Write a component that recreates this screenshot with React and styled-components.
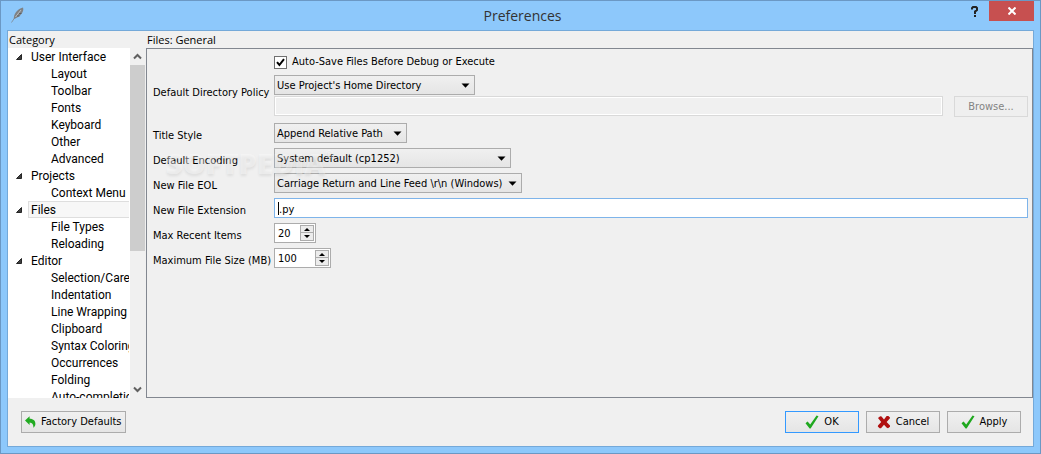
import React, { useState } from "react";
import styled, { createGlobalStyle, css } from "styled-components";

const GlobalStyle = createGlobalStyle`
  * {
    box-sizing: border-box;
  }
  body {
    margin: 0;
    font-family: "DejaVu Sans Condensed", "DejaVu Sans", sans-serif;
    font-size: 11px;
    line-height: 16px;
    color: #000;
  }
  button, input, select {
    font: inherit;
    color: inherit;
    margin: 0;
    border-radius: 0;
  }
`;

const Window = styled.div`
  display: flex;
  flex-direction: column;
  height: 100vh;
  padding: 0 6px 6px;
  background: #8dc8fb;
  border: 1px solid #6b98c4;
`;

const TitleBar = styled.header`
  display: grid;
  grid-template-columns: 1fr auto 1fr;
  height: 29px;
  flex: none;
  padding-left: 4px;
`;

const AppIcon = styled.svg`
  width: 14px;
  height: 18px;
  margin-top: 5px;
`;

const Title = styled.h1`
  margin: 0;
  padding-top: 4px;
  font: 14px/21px "Open Sans", sans-serif;
  color: #333;
`;

const WindowButtons = styled.div`
  display: flex;
  justify-content: flex-end;
  align-items: flex-start;
`;

const WindowButton = styled.button`
  display: flex;
  align-items: center;
  justify-content: center;
  width: ${(props) => (props.$close ? "45px" : "28px")};
  height: 20px;
  padding: 0;
  border: none;
  background: ${(props) => (props.$close ? "#c75050" : "transparent")};
`;

const Client = styled.main`
  display: flex;
  flex-direction: column;
  flex: 1;
  min-height: 0;
  background: #f0f0f0;
  border: 1px solid #74a9d9;
`;

const Body = styled.div`
  display: flex;
  gap: 1px;
  flex: 1;
  min-height: 0;
`;

const Sidebar = styled.nav`
  display: flex;
  flex-direction: column;
  width: 137px;
  flex: none;
`;

const PaneTitle = styled.h2`
  margin: 0;
  padding-left: 1px;
  flex: none;
  font: 11px/17px "Open Sans", sans-serif;
`;

const TreeArea = styled.div`
  display: flex;
  flex: 1;
  min-height: 0;
`;

const Tree = styled.ul`
  flex: 1;
  min-width: 0;
  margin: 0;
  padding: 0 1px 0 0;
  overflow: hidden;
  list-style: none;
  background: #fff;
  font: 12px/17px Roboto, sans-serif;
  white-space: nowrap;
`;

const TreeItem = styled.li`
  display: flex;
  align-items: center;
  height: 17px;
  padding-left: ${(props) => (props.$child ? "40px" : "8px")};
  overflow: hidden;
`;

const TreeArrow = styled.svg`
  width: 6px;
  height: 6px;
  margin-right: 6px;
  flex: none;
`;

const TreeLabel = styled.span`
  flex: 1;
  height: 17px;
  padding: 0 2px;
  line-height: 16px;
  border: 1px solid transparent;
  ${(props) =>
    props.$selected &&
    css`
      background: #f7f7f7;
      border-color: #dedede;
      border-right: none;
    `}
`;

const Scrollbar = styled.div`
  display: flex;
  flex-direction: column;
  width: 15px;
  background: #f0f0f0;
`;

const ScrollButton = styled.button`
  display: flex;
  align-items: center;
  justify-content: center;
  height: 17px;
  padding: 0;
  border: none;
  background: transparent;
`;

const ScrollTrack = styled.div`
  flex: 1;
`;

const ScrollThumb = styled.div`
  height: 59%;
  background: #cdcdcd;
`;

const Content = styled.section`
  position: relative;
  display: flex;
  flex-direction: column;
  flex: 1;
  min-width: 0;
`;

const Panel = styled.form`
  display: grid;
  grid-template-columns: 115px 1fr;
  align-content: start;
  gap: 5px 6px;
  flex: 1;
  min-height: 0;
  padding: 5px 4px 5px 6px;
  border: 1px solid #828790;
`;

const Label = styled.label`
  padding-top: ${(props) => (props.$tall ? "11px" : "6px")};
  line-height: 14px;
  white-space: nowrap;
`;

const Field = styled.div`
  display: flex;
  flex-wrap: wrap;
  align-items: flex-start;
  gap: 1px 11px;
  min-height: ${(props) => (props.$short ? "16px" : "20px")};
  padding-bottom: ${(props) => (props.$spaced ? "1px" : "0")};
`;

const CheckLabel = styled.label`
  display: flex;
  align-items: center;
  gap: 5px;
`;

const CheckBox = styled.span`
  display: grid;
  width: 13px;
  height: 13px;

  > * {
    grid-area: 1 / 1;
  }
  svg {
    pointer-events: none;
  }
`;

const CheckInput = styled.input`
  appearance: none;
  width: 13px;
  height: 13px;
  background: #fff;
  border: 1px solid #707070;

  &:not(:checked) + svg {
    display: none;
  }
`;

const ComboBox = styled.span`
  display: grid;
  align-items: center;
  width: ${(props) => props.$width}px;

  > * {
    grid-area: 1 / 1;
  }
  svg {
    justify-self: end;
    margin-right: 5px;
    pointer-events: none;
  }
`;

const Select = styled.select`
  appearance: none;
  width: 100%;
  height: 20px;
  padding: 1px 2px 0;
  border: 1px solid #acacac;
  background: linear-gradient(#f0f0f0, #e5e5e5);
`;

const TextInput = styled.input`
  flex: 1;
  width: 100%;
  height: 20px;
  padding: 2px 4px 0;
  outline: none;
  background: #fff;
  border: 1px solid #7eb4ea;

  &:disabled {
    background: #f0f0f0;
    border-color: #d9d9d9;
    box-shadow: inset 0 0 0 1px #fff;
  }
`;

const CaretField = styled.span`
  position: relative;
  display: flex;
  flex: 1;

  &::before {
    content: "";
    position: absolute;
    left: 4px;
    top: 4px;
    width: 1px;
    height: 13px;
    background: #000;
  }
`;

const Line = styled.span`
  display: flex;
  flex-basis: 100%;
`;

const SpinBox = styled.span`
  display: flex;
  width: ${(props) => props.$width}px;
  height: 20px;
  padding: 1px;
  background: #fff;
  border: 1px solid #acacac;
`;

const SpinInput = styled.input`
  appearance: textfield;
  flex: 1;
  min-width: 0;
  padding: 1px 0 0 2px;
  border: none;
  outline: none;
  background: transparent;

  &::-webkit-inner-spin-button {
    appearance: none;
  }
`;

const SpinButtons = styled.span`
  display: grid;
  grid-template-rows: 1fr 1fr;
  width: 14px;
`;

const SpinButton = styled.button`
  display: flex;
  align-items: center;
  justify-content: center;
  min-height: 0;
  padding: 0;
  border: 1px solid #acacac;
  background: #ececec;

  & + & {
    border-top: none;
  }
`;

const Button = styled.button`
  display: flex;
  align-items: center;
  justify-content: center;
  gap: 5px;
  min-width: 74px;
  height: ${(props) => (props.$low ? "21px" : "22px")};
  padding: 0 3px;
  white-space: nowrap;
  border: 1px solid ${(props) => (props.$primary ? "#3399ff" : "#acacac")};
  background: linear-gradient(#f0f0f0, #e5e5e5);

  &:disabled {
    color: #838383;
    background: #efefef;
    border-color: #d9d9d9;
  }
`;

const Footer = styled.footer`
  display: flex;
  align-items: center;
  gap: 7px;
  flex: none;
  height: 48px;
  padding: 0 12px 0 13px;
`;

const Spacer = styled.span`
  flex: 1;
`;

const Watermark = styled.div`
  position: absolute;
  left: 20px;
  top: 118px;
  font: 800 29px/28px "Open Sans", sans-serif;
  color: rgba(255, 255, 255, 0.4);
  text-shadow: 0 2px 3px rgba(0, 0, 0, 0.08);
  pointer-events: none;

  sup {
    font-size: 10px;
    line-height: 10px;
    vertical-align: top;
  }
`;

const categories = [
  { name: "User Interface", items: ["Layout", "Toolbar", "Fonts", "Keyboard", "Other", "Advanced"] },
  { name: "Projects", items: ["Context Menu"] },
  { name: "Files", items: ["File Types", "Reloading"] },
  {
    name: "Editor",
    items: [
      "Selection/Caret",
      "Indentation",
      "Line Wrapping",
      "Clipboard",
      "Syntax Coloring",
      "Occurrences",
      "Folding",
      "Auto-completion",
    ],
  },
];

const DownArrow = () => (
  <svg width="9" height="5" viewBox="0 0 9 5">
    <path d="M0.5 0.5h8L4.5 4.8z" />
  </svg>
);

const Chevron = ({ up }) => (
  <svg width="9" height="7" viewBox="0 0 9 7" fill="none" stroke="#606060" strokeWidth="2">
    <path d={up ? "M1 5.5L4.5 2 8 5.5" : "M1 1.5L4.5 5 8 1.5"} />
  </svg>
);

const CheckIcon = () => (
  <svg width="14" height="14" viewBox="0 0 14 14">
    <path d="M0.5 8.2L2.6 6.6 5.2 9.4 11.6 0.6 13.5 1.2 5.6 13.6 4.6 13.6z" fill="#1fa81f" />
  </svg>
);

const CrossIcon = () => (
  <svg width="14" height="14" viewBox="0 0 14 14">
    <path
      d="M1 3L3.2 1.2 4.6 1.4 7 4.4 9.6 1 11.4 1 13 2.4 12.8 3.4 9.6 7 13 10.6 13 11.8 11 13.2 9.8 12.8 7 9.8 4 13.2 2.6 13.2 0.8 11.6 1 10.6 4.2 7z"
      fill="#b01010"
    />
  </svg>
);

const UndoIcon = () => (
  <svg width="11" height="12" viewBox="0 0 11 12">
    <path d="M0 4.5L4.6 0.3v2.4C8.6 2.7 10.6 5 10.4 8 10.3 9.6 9.6 10.8 8.4 11.8 8.6 8.6 7.4 6.6 4.6 6.5v2.6z" fill="#22ab22" />
  </svg>
);

const Combo = ({ id, width, value }) => (
  <ComboBox $width={width}>
    <Select id={id} defaultValue={value}>
      <option>{value}</option>
    </Select>
    <DownArrow />
  </ComboBox>
);

const Spin = ({ id, width, initial }) => {
  const [value, setValue] = useState(initial);
  return (
    <SpinBox $width={width}>
      <SpinInput id={id} type="number" value={value} onChange={(e) => setValue(Number(e.target.value))} />
      <SpinButtons>
        <SpinButton type="button" aria-label="Increase" onClick={() => setValue(value + 1)}>
          <svg width="6" height="3" viewBox="0 0 6 3">
            <path d="M0 3L3 0 6 3z" />
          </svg>
        </SpinButton>
        <SpinButton type="button" aria-label="Decrease" onClick={() => setValue(value - 1)}>
          <svg width="6" height="3" viewBox="0 0 6 3">
            <path d="M0 0h6L3 3z" />
          </svg>
        </SpinButton>
      </SpinButtons>
    </SpinBox>
  );
};

const CategoryTree = () => {
  const [selected, setSelected] = useState("Files");
  return (
    <Tree>
      {categories.map((category) => (
        <React.Fragment key={category.name}>
          <TreeItem onClick={() => setSelected(category.name)}>
            <TreeArrow viewBox="0 0 6 6">
              <path d="M5.5 0.5v5h-5z" fill="#404040" stroke="#262626" />
            </TreeArrow>
            <TreeLabel $selected={selected === category.name}>{category.name}</TreeLabel>
          </TreeItem>
          {category.items.map((item) => (
            <TreeItem key={item} $child onClick={() => setSelected(item)}>
              <TreeLabel $selected={selected === item}>{item}</TreeLabel>
            </TreeItem>
          ))}
        </React.Fragment>
      ))}
    </Tree>
  );
};

const App = () => (
  <>
    <GlobalStyle />
    <Window>
      <TitleBar>
        <AppIcon viewBox="0 0 14 18">
          <path d="M0.5 16.5L3.5 12" stroke="#8293a3" fill="none" />
          <path d="M3 13C2 9 6 3 12 1.5 13.5 5 9.5 11 3 13z" fill="#7f8286" />
          <path d="M4.5 11L10 4" stroke="#b9bec2" fill="none" />
          <path d="M6 10l2.5 0M8 7.5l2.5 0" stroke="#5d6063" fill="none" />
        </AppIcon>
        <Title>Preferences</Title>
        <WindowButtons>
          <WindowButton aria-label="Help">
            <svg width="8" height="11" viewBox="0 0 8 11" fill="none" stroke="#222" strokeWidth="2">
              <path d="M1 3.5V2.2L2 1h3l1 1v2L4 5.6V8M3 10h2" />
            </svg>
          </WindowButton>
          <WindowButton $close aria-label="Close">
            <svg width="8" height="8" viewBox="0 0 8 8" fill="none" stroke="#fff" strokeWidth="2">
              <path d="M0.5 0.5l7 7M7.5 0.5l-7 7" />
            </svg>
          </WindowButton>
        </WindowButtons>
      </TitleBar>
      <Client>
        <Body>
          <Sidebar>
            <PaneTitle>Category</PaneTitle>
            <TreeArea>
              <CategoryTree />
              <Scrollbar>
                <ScrollButton aria-label="Scroll up">
                  <Chevron up />
                </ScrollButton>
                <ScrollTrack>
                  <ScrollThumb />
                </ScrollTrack>
                <ScrollButton aria-label="Scroll down">
                  <Chevron />
                </ScrollButton>
              </Scrollbar>
            </TreeArea>
          </Sidebar>
          <Content>
            <PaneTitle>Files: General</PaneTitle>
            <Panel>
              <span />
              <Field $short>
                <CheckLabel>
                  <CheckBox>
                    <CheckInput type="checkbox" defaultChecked />
                    <svg width="13" height="13" viewBox="0 0 13 13" fill="none" stroke="#000" strokeWidth="2">
                      <path d="M3 6.2L5.4 9 10 3.2" />
                    </svg>
                  </CheckBox>
                  Auto-Save Files Before Debug or Execute
                </CheckLabel>
              </Field>
              <Label htmlFor="policy" $tall>
                Default Directory Policy
              </Label>
              <Field $spaced>
                <Line>
                  <Combo id="policy" width={201} value="Use Project's Home Directory" />
                </Line>
                <TextInput aria-label="Directory" disabled />
                <Button type="button" disabled $low>
                  Browse...
                </Button>
              </Field>
              <Label htmlFor="title-style">Title Style</Label>
              <Field>
                <Combo id="title-style" width={133} value="Append Relative Path" />
              </Field>
              <Label htmlFor="encoding">Default Encoding</Label>
              <Field>
                <Combo id="encoding" width={237} value="System default (cp1252)" />
              </Field>
              <Label htmlFor="eol">New File EOL</Label>
              <Field>
                <Combo id="eol" width={248} value="Carriage Return and Line Feed \r\n (Windows)" />
              </Field>
              <Label htmlFor="extension">New File Extension</Label>
              <Field>
                <CaretField>
                  <TextInput id="extension" defaultValue=".py" />
                </CaretField>
              </Field>
              <Label htmlFor="recent">Max Recent Items</Label>
              <Field>
                <Spin id="recent" width={42} initial={20} />
              </Field>
              <Label htmlFor="max-size">Maximum File Size (MB)</Label>
              <Field>
                <Spin id="max-size" width={57} initial={100} />
              </Field>
            </Panel>
            <Watermark aria-hidden="true">
              SOFTPEDIA<sup>®</sup>
            </Watermark>
          </Content>
        </Body>
        <Footer>
          <Button type="button">
            <UndoIcon />
            Factory Defaults
          </Button>
          <Spacer />
          <Button type="button" $primary>
            <CheckIcon />
            OK
          </Button>
          <Button type="button">
            <CrossIcon />
            Cancel
          </Button>
          <Button type="button">
            <CheckIcon />
            Apply
          </Button>
        </Footer>
      </Client>
    </Window>
  </>
);

export default App;
